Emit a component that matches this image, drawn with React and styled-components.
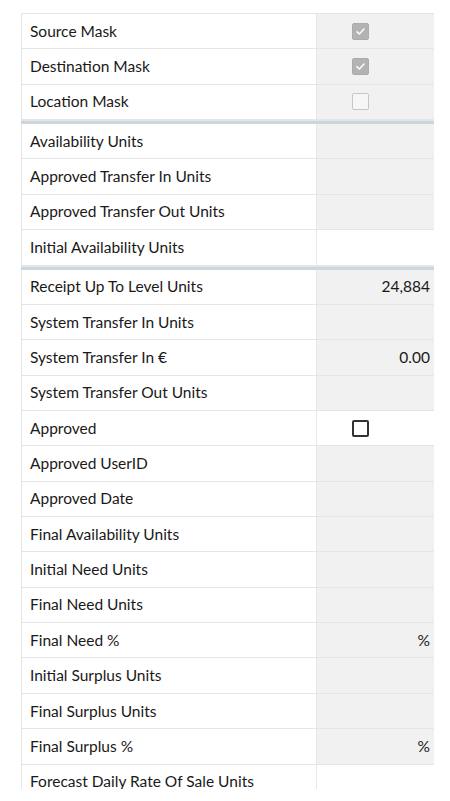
import styled, { createGlobalStyle } from 'styled-components';

const GlobalStyle = createGlobalStyle`
  body {
    margin: 0;
    background: #ffffff;
    font-family: Lato, "Noto Sans", sans-serif;
  }
`;

const Page = styled.div`
  padding: 13px 0 0 21px;
  height: 789px;
  box-sizing: border-box;
  overflow: hidden;
`;

const Table = styled.div`
  width: 413px;
  border-top: 1px solid #e6e6e6;
`;

const Divider = styled.div`
  height: 4px;
  background: #cdd6da;
  border-top: 1px solid #dfe5e8;
  box-sizing: border-box;
`;

const Row = styled.div`
  display: flex;
  height: 35.36px;
  box-sizing: border-box;
  border-bottom: 1px solid #e6e6e6;
`;

const Label = styled.div`
  width: 296px;
  box-sizing: border-box;
  border-left: 1px solid #e6e6e6;
  border-right: 1px solid #e6e6e6;
  padding: 0 0 1px 8px;
  display: flex;
  align-items: center;
  font-size: 15.5px;
  color: #1a1918;
  white-space: nowrap;
`;

const Value = styled.div`
  flex: 1;
  display: flex;
  align-items: center;
  justify-content: ${(p) => (p.$box ? 'flex-start' : 'flex-end')};
  padding: ${(p) => (p.$box ? '0 0 0 35px' : '0 4px 1px 0')};
  background: ${(p) => (p.$editable ? '#ffffff' : '#f1f1f1')};
  font-size: 15.5px;
  color: #1a1918;
`;

const Box = styled.span`
  width: 17px;
  height: 17px;
  box-sizing: border-box;
  border-radius: 2px;
  display: inline-flex;
  align-items: center;
  justify-content: center;
  ${(p) =>
    p.$kind === 'checked'
      ? 'background: #b3b3b3; border: 1px solid #ababab;'
      : p.$kind === 'off'
      ? 'background: #f6f6f6; border: 1.5px solid #c6c6c6;'
      : 'background: #ffffff; border: 2px solid #333333;'}
`;

const Check = () => (
  <svg width="11" height="11" viewBox="0 0 12 12">
    <path d="M2.2 6.4 L4.8 8.8 L9.8 3.4" fill="none" stroke="#ffffff" strokeWidth="1.6" strokeLinecap="round" strokeLinejoin="round" />
  </svg>
);

const sections = [
  [
    { label: 'Source Mask', box: 'checked' },
    { label: 'Destination Mask', box: 'checked' },
    { label: 'Location Mask', box: 'off' },
  ],
  [
    { label: 'Availability Units' },
    { label: 'Approved Transfer In Units' },
    { label: 'Approved Transfer Out Units' },
    { label: 'Initial Availability Units', editable: true },
  ],
  [
    { label: 'Receipt Up To Level Units', value: '24,884' },
    { label: 'System Transfer In Units' },
    { label: 'System Transfer In €', value: '0.00' },
    { label: 'System Transfer Out Units' },
    { label: 'Approved', box: 'edit', editable: true },
    { label: 'Approved UserID' },
    { label: 'Approved Date' },
    { label: 'Final Availability Units' },
    { label: 'Initial Need Units' },
    { label: 'Final Need Units' },
    { label: 'Final Need %', value: '%' },
    { label: 'Initial Surplus Units' },
    { label: 'Final Surplus Units' },
    { label: 'Final Surplus %', value: '%' },
    { label: 'Forecast Daily Rate Of Sale Units', editable: true },
  ],
];

const App = () => {
  return (
    <>
      <GlobalStyle />
      <Page>
        <Table>
          {sections.map((rows, i) => (
            <div key={i}>
              {i > 0 && <Divider />}
              {rows.map((r) => (
                <Row key={r.label}>
                  <Label>{r.label}</Label>
                  <Value $box={!!r.box} $editable={r.editable}>
                    {r.box ? (
                      <Box $kind={r.box}>{r.box === 'checked' && <Check />}</Box>
                    ) : (
                      r.value
                    )}
                  </Value>
                </Row>
              ))}
            </div>
          ))}
        </Table>
      </Page>
    </>
  );
};

export default App;
